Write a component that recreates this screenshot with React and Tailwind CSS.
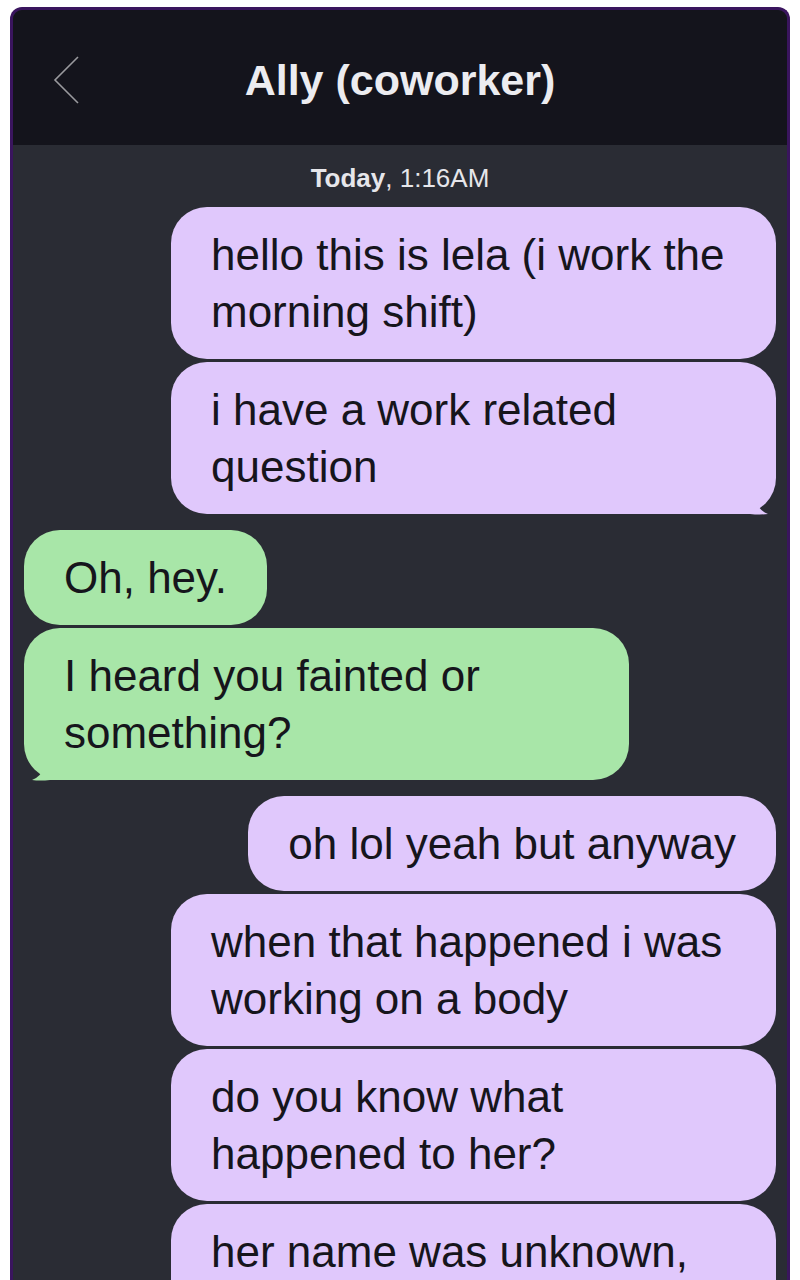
const messages = [
  { from: 'me', text: 'hello this is lela (i work the morning shift)' },
  { from: 'me', text: 'i have a work related question', tail: true },
  { from: 'them', text: 'Oh, hey.' },
  { from: 'them', text: 'I heard you fainted or something?', tail: true },
  { from: 'me', text: 'oh lol yeah but anyway' },
  { from: 'me', text: 'when that happened i was working on a body' },
  { from: 'me', text: 'do you know what happened to her?' },
  { from: 'me', text: 'her name was unknown, they said she was found by the river', tail: true },
];

function Tail({ side, color }) {
  const pos = side === 'right' ? 'right-[6px]' : 'left-[6px] -scale-x-100';
  return (
    <svg
      className={`absolute bottom-[-2px] ${pos}`}
      width="30"
      height="16"
      viewBox="0 0 30 16"
    >
      <path d="M0 14 L0 4 L16 0 Q18 10 28 14 Q20 15 10 14 Z" fill={color} />
    </svg>
  );
}

function Bubble({ msg, first }) {
  const mine = msg.from === 'me';
  const bg = mine ? '#e0c8fc' : '#a8e6a8';
  return (
    <div className={`flex ${mine ? 'justify-end' : 'justify-start'} ${first ? 'mt-[16px]' : 'mt-[3px]'}`}>
      <div
        className={`relative max-w-[605px] rounded-[36px] px-[40px] py-[19px] text-[44px] leading-[57px] text-[#16151c] ${
          mine ? 'bg-[#e0c8fc]' : 'bg-[#a8e6a8]'
        }`}
      >
        {msg.text}
        {msg.tail && <Tail side={mine ? 'right' : 'left'} color={bg} />}
      </div>
    </div>
  );
}

export default function App() {
  return (
    <div className="h-[1280px] overflow-hidden bg-white pt-[7px] px-[10px] font-['Liberation_Sans',Arial,sans-serif]">
      <div className="h-[1300px] overflow-hidden rounded-t-[12px] border-[3px] border-b-0 border-[#3a155e] bg-[#2a2c34]">
        <header className="relative flex h-[135px] items-center justify-center bg-[#14141c]">
          <svg className="absolute left-[40px] top-[46px]" width="30" height="50" viewBox="0 0 30 50">
            <polyline points="25,1 2,24 25,47" fill="none" stroke="#9a9a9e" strokeWidth="1.6" />
          </svg>
          <h1 className="text-[43px] font-bold text-[#ececf0] mt-[6px]">Ally (coworker)</h1>
        </header>

        <div className="pt-[18px] text-center text-[26px] leading-[30px] text-[#e6e6ea]">
          <span className="font-bold">Today</span>, 1:16AM
        </div>

        <div className="px-[11px] -mt-[2px]">
          {messages.map((m, i) => (
            <Bubble key={i} msg={m} first={i === 0 || messages[i - 1].from !== m.from} />
          ))}
        </div>
      </div>
    </div>
  );
}
